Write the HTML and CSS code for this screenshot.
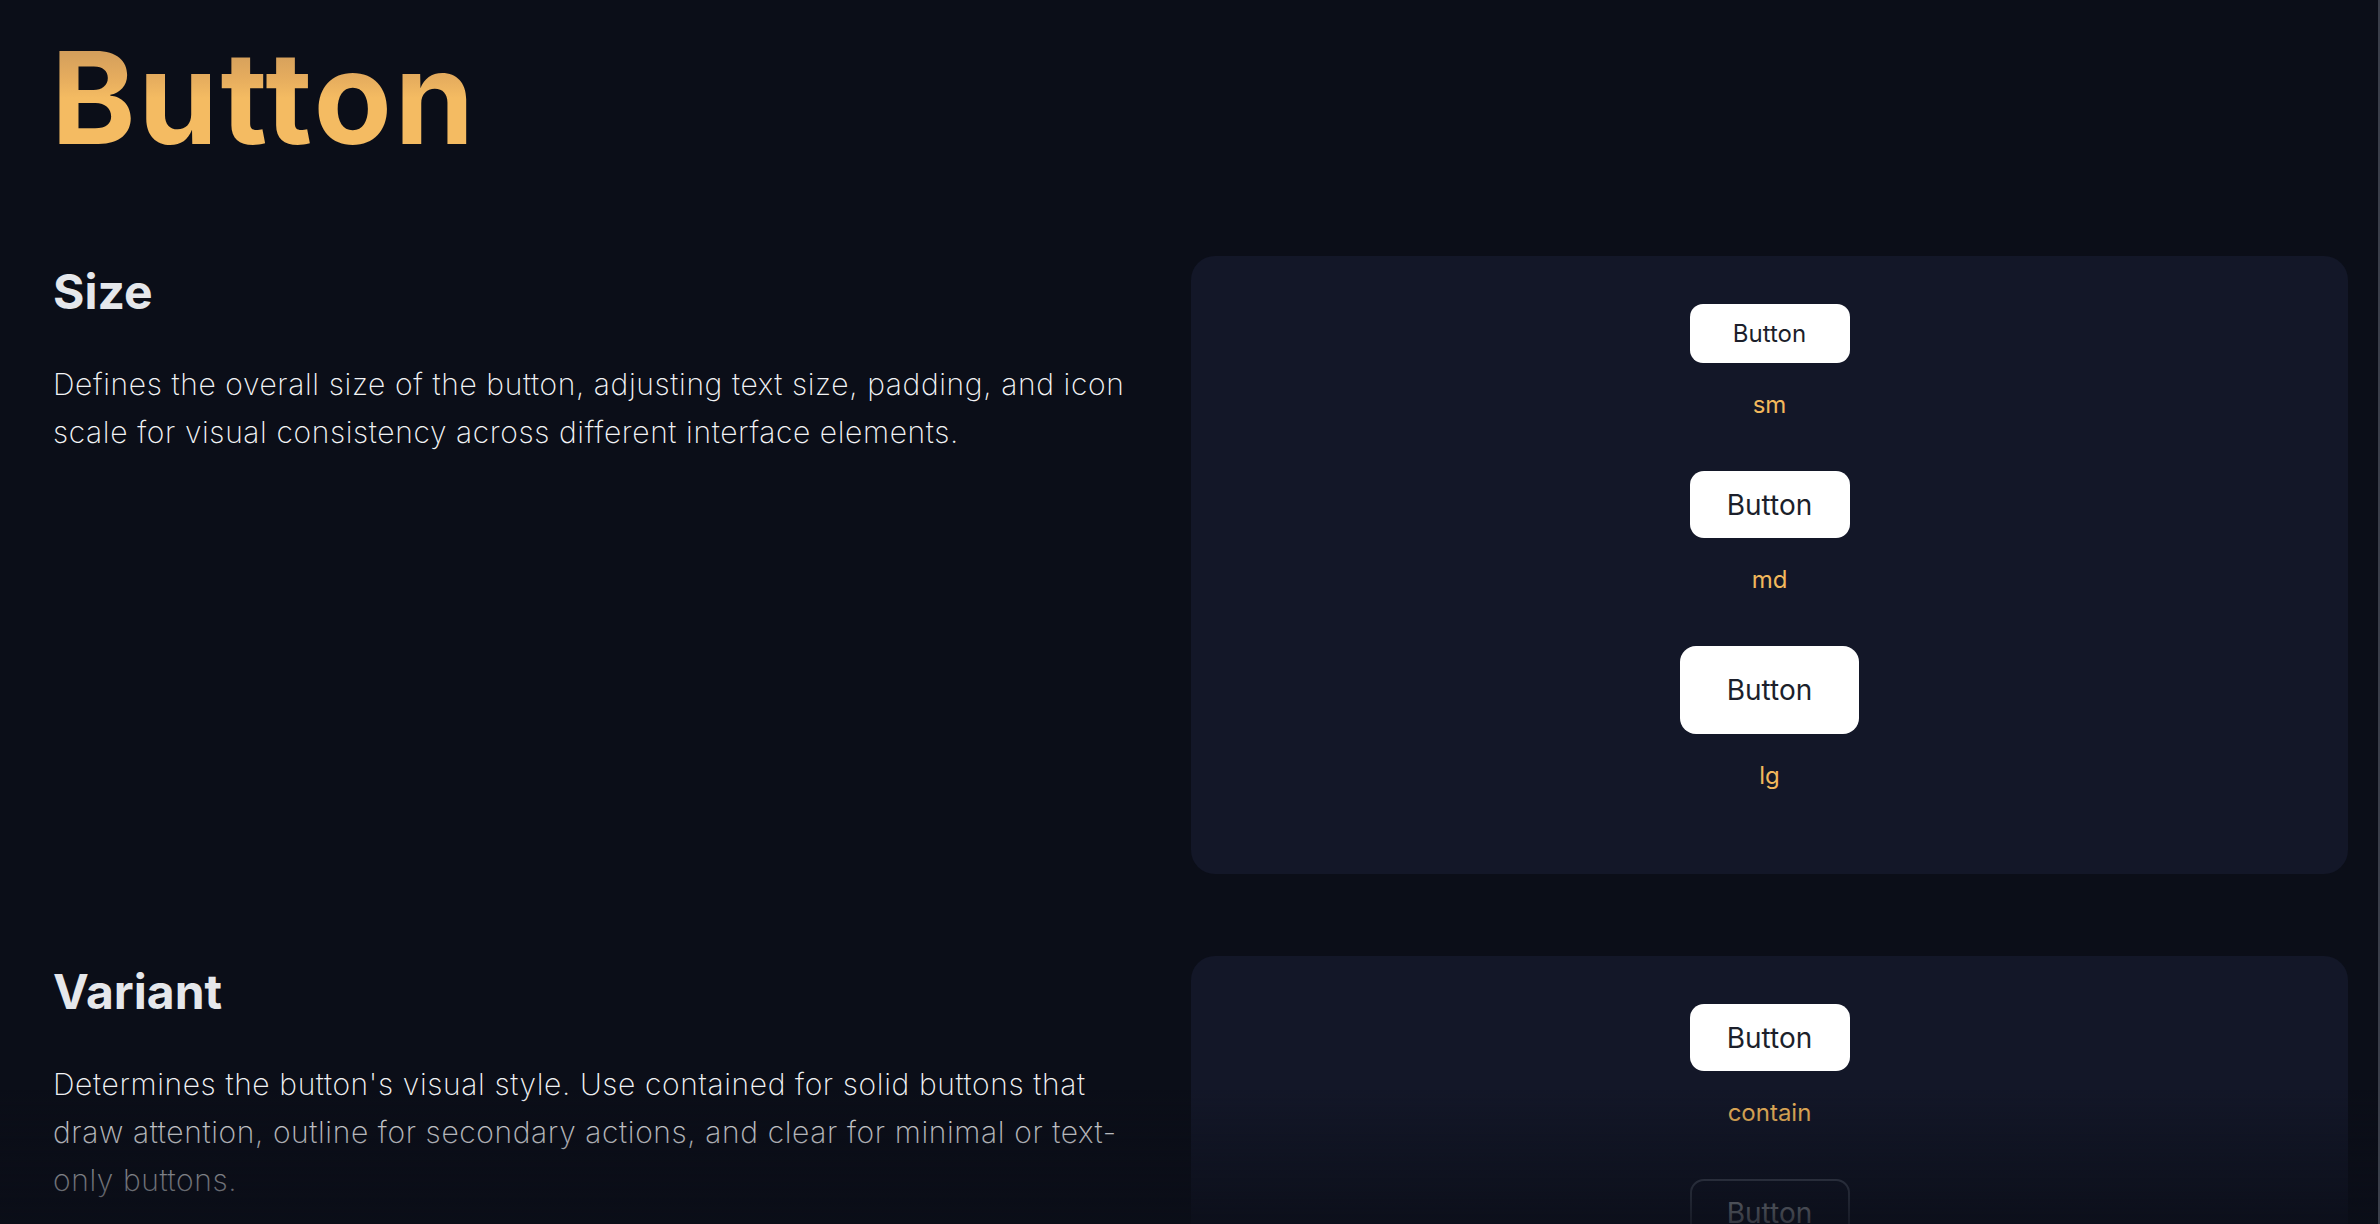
FILE: index.html
```html
<!DOCTYPE html>
<html lang="en">
<head>
<meta charset="utf-8">
<title>Button</title>
<link rel="stylesheet" href="styles.css">
</head>
<body>
<main class="page">
  <h1 class="title">Button</h1>

  <section class="section">
    <div class="info">
      <h2 class="heading">Size</h2>
      <p class="desc">Defines the overall size of the button, adjusting text size, padding, and icon scale for visual consistency across different interface elements.</p>
    </div>
    <div class="card">
      <div class="item">
        <button class="btn btn-sm">Button</button>
        <span class="label">sm</span>
      </div>
      <div class="item">
        <button class="btn btn-md">Button</button>
        <span class="label">md</span>
      </div>
      <div class="item">
        <button class="btn btn-lg">Button</button>
        <span class="label">lg</span>
      </div>
    </div>
  </section>

  <section class="section">
    <div class="info">
      <h2 class="heading">Variant</h2>
      <p class="desc">Determines the button's visual style. Use contained for solid buttons that draw attention, outline for secondary actions, and clear for minimal or text-only buttons.</p>
    </div>
    <div class="card">
      <div class="item">
        <button class="btn btn-md">Button</button>
        <span class="label">contain</span>
      </div>
      <div class="item">
        <button class="btn btn-md btn-outline">Button</button>
        <span class="label">outline</span>
      </div>
      <div class="item">
        <button class="btn btn-md btn-clear">Button</button>
        <span class="label">clear</span>
      </div>
    </div>
  </section>
</main>
<div class="fade"></div>
<div class="scrollbar"></div>
</body>
</html>
```

FILE: styles.css
```css
html, body {
  margin: 0;
  padding: 0;
  background: #0b0e18;
}

body {
  font-family: "Inter", "Noto Sans", sans-serif;
  color: #e5e7eb;
  overflow: hidden;
}

.page {
  padding: 34px 32px 120px 53px;
}

.title {
  margin: 0 0 94px -2px;
  font-size: 128px;
  line-height: 128px;
  font-weight: 700;
  letter-spacing: 2.5px;
  background: linear-gradient(180deg, #c8955a 0%, #e6ad5e 35%, #f4bb62 50%, #f4bb62 100%);
  -webkit-background-clip: text;
  background-clip: text;
  color: transparent;
  display: inline-block;
}

.section {
  display: grid;
  grid-template-columns: 1090px 1157px;
  column-gap: 48px;
  margin-bottom: 82px;
}

.heading {
  margin: 0 0 32px 0;
  font-size: 48px;
  line-height: 72px;
  font-weight: 700;
  color: #e5e7eb;
}

.desc {
  margin: 0;
  font-size: 30px;
  line-height: 48px;
  font-weight: 200;
  letter-spacing: 0.62px;
  color: #f3f4f6;
}

.card {
  background: #131728;
  border-radius: 24px;
  padding: 48px 0 80px;
  display: flex;
  flex-direction: column;
  align-items: center;
  gap: 48px;
}

.item {
  display: flex;
  flex-direction: column;
  align-items: center;
  gap: 24px;
}

.btn {
  font-family: "Inter", "Noto Sans", sans-serif;
  font-weight: 400;
  background: #ffffff;
  color: #1c1f2b;
  border: 0;
  margin: 0;
  padding: 0;
  display: flex;
  align-items: center;
  justify-content: center;
  box-sizing: border-box;
}

.btn-sm {
  width: 160px;
  height: 59px;
  font-size: 24px;
  border-radius: 13px;
}

.btn-md {
  width: 160px;
  height: 67px;
  font-size: 28px;
  border-radius: 14px;
}

.btn-lg {
  width: 179px;
  height: 88px;
  font-size: 28px;
  border-radius: 16px;
}

.btn-outline {
  background: transparent;
  border: 2px solid #4b5263;
  color: #d1d5db;
}

.btn-clear {
  background: transparent;
  color: #d1d5db;
}

.label {
  font-size: 24px;
  line-height: 36px;
  font-weight: 400;
  color: #f2b85c;
}

.fade {
  position: fixed;
  left: 0;
  right: 0;
  bottom: 0;
  height: 134px;
  background: linear-gradient(180deg, rgba(11, 14, 24, 0) 0%, rgba(11, 14, 24, 0.8) 100%);
  pointer-events: none;
}

.scrollbar {
  position: fixed;
  top: 0;
  right: 0;
  width: 2px;
  height: 100%;
  background: #3b3f4a;
}
```
